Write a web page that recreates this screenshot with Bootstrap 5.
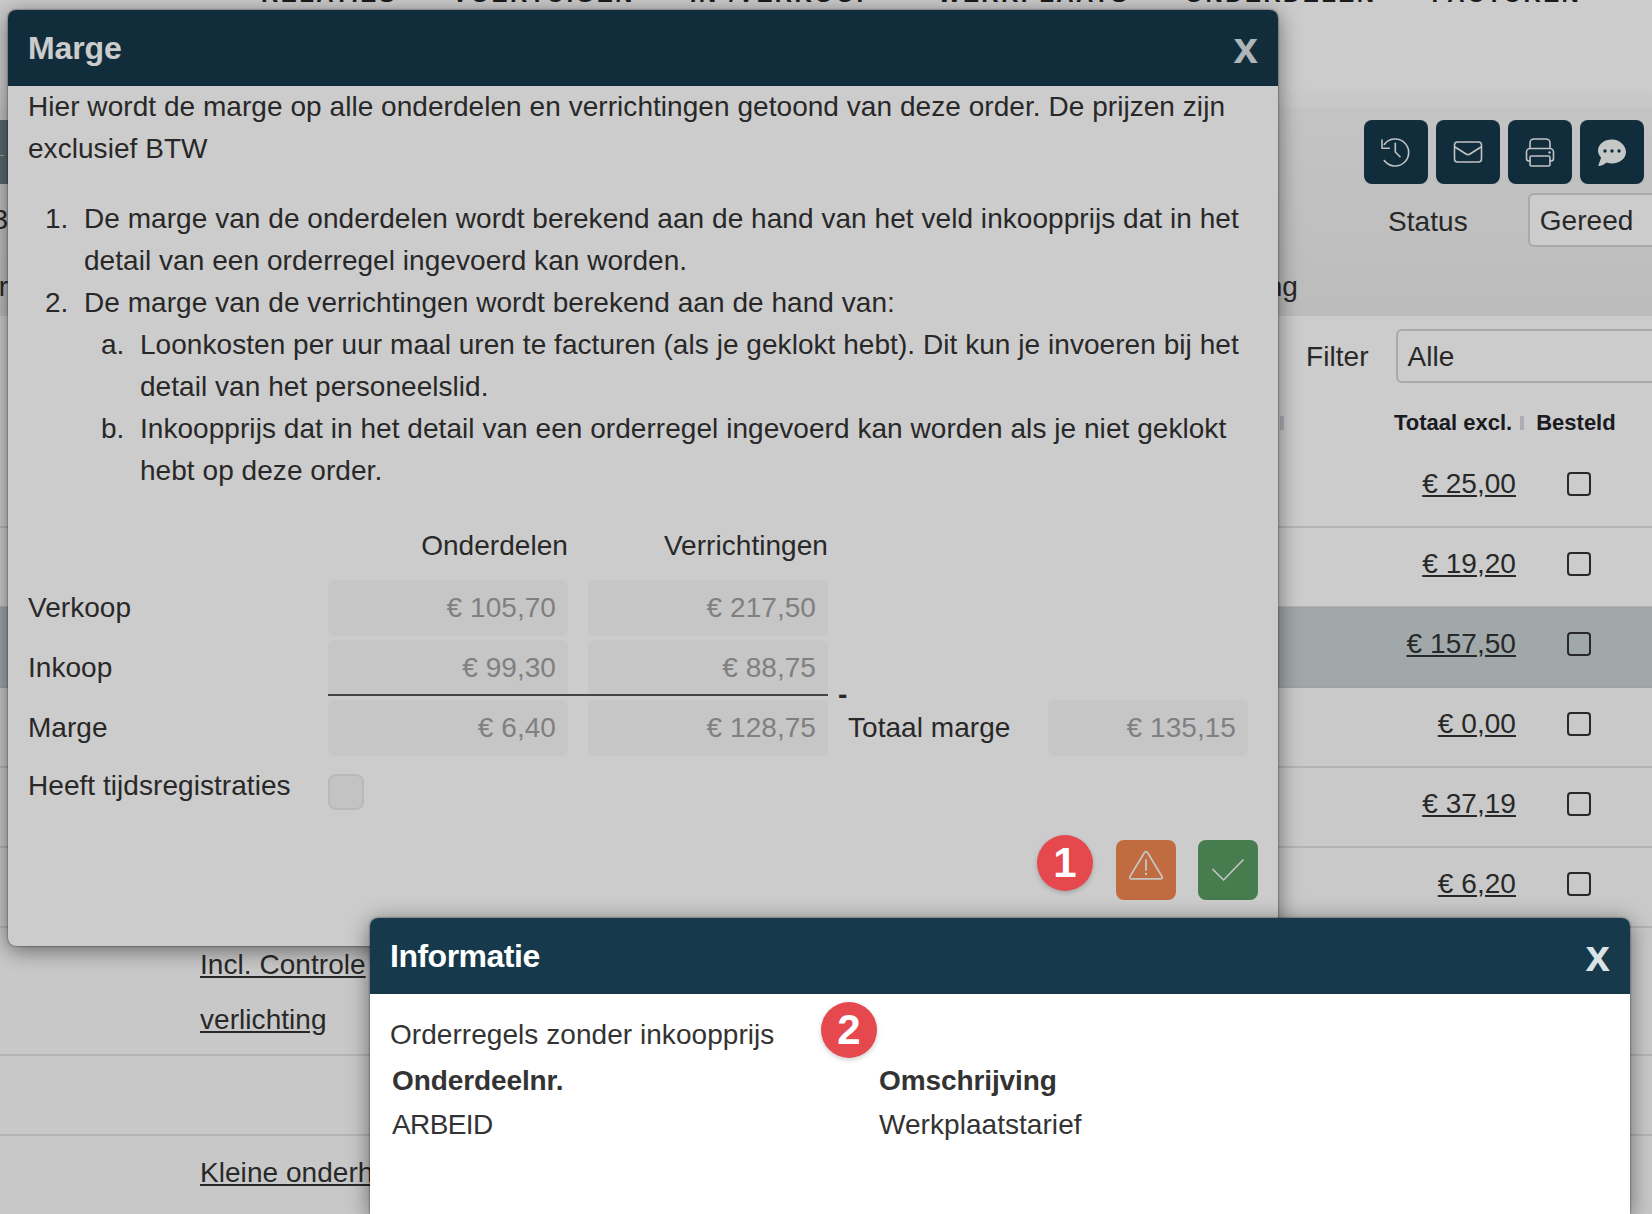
<!doctype html>
<html lang="nl">
<head>
<meta charset="utf-8">
<title>Marge</title>
<link rel="stylesheet" href="https://cdn.jsdelivr.net/npm/bootstrap@5.3.0/dist/css/bootstrap.min.css">
<style>
html,body{height:1214px;overflow:hidden;background:#fff}
body{font-family:"Liberation Sans",Arial,sans-serif;font-size:28px;line-height:42px;letter-spacing:.05px;color:#333;position:relative}
.sheet{width:1652px;height:1214px;overflow:hidden}
.topnav{height:105px;margin-top:-20px;padding:0 0 0 261px;gap:55px;font-weight:700;font-size:24px;letter-spacing:2.4px;line-height:28px;color:#222;text-transform:uppercase;white-space:nowrap}
.nav-wide{margin-right:8px}
.subbar{height:23px;background:linear-gradient(#fff,#f9f9f9)}
.band{height:208px;background:linear-gradient(#f5f5f5,#ececec);padding-top:12px}
.btnrow{gap:8px;padding-right:8px}
.back{width:64px;height:64px;margin-left:-56px;margin-right:auto;background:#6f848d;color:#ddd;font-size:20px;line-height:64px;text-align:right}
.tool{width:64px;height:64px;padding:0;border:0;border-radius:8px;background:#16394b}
.tool svg{display:block}
.tool-line{fill:none;stroke:#f2f4f5;stroke-width:1.6;stroke-linecap:round;stroke-linejoin:round}
.status-row{height:54px;margin-top:9px}
.stub{width:8px;overflow:hidden;direction:rtl;flex:none;margin-right:1380px}
.pick.form-select{font-size:28px;line-height:32px;color:#333;height:54px;padding:10px;border:2px solid #d4d4d4;border-radius:6px;background-color:#fff;flex:none;width:400px}
.pick-status{margin-left:60px}
.cut-row{height:42px;margin-top:19px;white-space:nowrap}
.cut-l{width:8px;overflow:hidden;flex:none;direction:rtl}
.cut-r{width:1290px;text-align:right;flex:none}
.filter-row{height:80px;padding-left:1306px;padding-top:13px;white-space:nowrap}
.filter-label{padding-top:7px}
.filter-row .pick{margin-left:27px}
.head-row{height:52px;padding-top:1px;font-size:22px;line-height:30px;font-weight:700;letter-spacing:0;color:#1f2428;white-space:nowrap}
.sep{display:inline-block;width:4px;height:14px;background:#d6dbe3}
.sep-a{margin-left:1280px;margin-right:110px}
.sep-b{margin-left:8px;margin-right:12px}
.trow{height:80px;padding-bottom:7px;border-bottom:2px solid #e2e2e2;padding-right:61px}
.trow.picked{background:#c9d2d5;border-bottom-color:#c4cccf;border-top:1px solid #c4cccf;height:81px;margin-top:-1px}
.trow.soft{background:#fcfcfc}
.trow a,a.textcell{color:#333}
.amt{margin-right:51px;text-decoration:underline}
.trow .tick{width:24px;height:24px;margin:0;flex:none;border:2px solid #333;border-radius:4px;background-color:transparent}
.textrow{height:128px;border-bottom:2px solid #e2e2e2;padding:16px 0 0 200px;background:#fbfbfb}
.textcell{display:block;line-height:42px;margin-bottom:13px}
.emptyrow{height:80px;border-bottom:2px solid #e2e2e2;background:#fbfbfb}
.lastrow{height:200px;padding:16px 0 0 200px;background:#fbfbfb}
.win{position:absolute;background:#fff;box-shadow:0 0 2px rgba(0,0,0,.7),0 4px 22px rgba(0,0,0,.5)}
.win-a{left:8px;top:10px;width:1270px;height:936px;border-radius:8px;z-index:10}
.win-b{left:370px;top:918px;width:1260px;height:296px;border-radius:8px 8px 0 0;z-index:30}
.win-head{height:76px;background:#16394b;color:#fff;padding:0 20px;border-radius:8px 8px 0 0}
.win-title{font-size:32px;font-weight:700;line-height:77px;letter-spacing:-.1px}
.win-b .win-title{letter-spacing:-.5px}
.win-x{font-size:44px;font-weight:700;color:#dce3e6;line-height:76px;letter-spacing:0}
.win-a .win-body{padding:0 28px 0 20px}
.win-b .win-body{padding:20px 20px}
.win-a .intro{margin:0 0 28px}
.steps{margin:0 0 33px;padding-left:56px}
.steps ol{margin:0;padding-left:56px}
.steps>li::marker{content:counter(list-item) ".\00a0\00a0"}
.steps ol>li::marker{content:counter(list-item,lower-alpha) ".\00a0\00a0"}
.mrow{height:56px;margin-bottom:4px;gap:20px;position:relative;align-items:center}
.mrow.headline{height:42px;margin-bottom:13px}
.mlabel{width:300px;flex:none;margin-right:-20px}
.mcol{width:240px;flex:none}
.val.form-control{width:240px;height:56px;flex:none;padding:7px 12px;font-size:28px;line-height:42px;text-align:right;color:#a0a0a0;background:#f8f8f8;border:0;border-radius:6px}
.val.wide{width:200px}
.rule{position:absolute;left:300px;width:500px;bottom:0;height:2px;background:#555}
.dash{position:absolute;left:810px;top:41px;line-height:28px;font-size:28px;font-weight:700}
.tlabel{width:200px;flex:none;margin-right:-20px}
.chkrow{margin-top:14px;height:36px}
.chkrow .mlabel{line-height:24px;position:relative;top:-2px}
.chkrow .form-check-input{width:36px;height:36px;margin:0;border:2px solid #e8e8e8;border-radius:8px;background-color:#f4f4f4;opacity:1;position:relative;top:4px}
.acts{gap:22px;margin-top:34px;margin-right:-8px}
.act{width:60px;height:60px;border:0;padding:0;border-radius:8px}
.act-warn{background:#f08850}
.act-ok{background:#599b62}
.act svg{display:block;margin:auto}
.act-warn svg{margin-bottom:10px}
.shade{position:absolute;inset:0;background:rgba(0,0,0,.2);z-index:20}
.pin{position:absolute;width:56px;height:56px;border-radius:50%;background:#e5484d;color:#fff;font-size:42px;font-weight:700;line-height:56px;text-align:center;z-index:40;box-shadow:0 2px 5px rgba(0,0,0,.2)}
.pin-a{left:1037px;top:835px}
.pin-b{left:821px;top:1002px}
.info-lead{margin-bottom:4px}
.grid-h{font-weight:700;letter-spacing:-.1px}
.info-a{width:489px;flex:none;padding-left:2px}
.info-tight{letter-spacing:-.6px}
.info-r{height:44px}
</style>
</head>
<body>
<div class="sheet">
  <div class="topnav d-flex"><span>Relaties</span><span>Voertuigen</span><span class="nav-wide">In-/Verkoop</span><span>Werkplaats</span><span>Onderdelen</span><span>Facturen</span></div>
  <div class="subbar"></div>
  <div class="band">
    <div class="d-flex btnrow">
      <div class="back">&#8592;</div>
      <button class="tool d-flex align-items-center justify-content-center" type="button" aria-label="Historie">
        <svg width="32" height="32" viewBox="0 0 32 32"><path class="tool-line" d="M4.3 8.500A13.500 13.500 0 1 1 4.300 24.500M2 4v8.300h7.300M15.300 7.300V16l4.700 4.700"/></svg>
      </button>
      <button class="tool d-flex align-items-center justify-content-center" type="button" aria-label="E-mail">
        <svg width="32" height="32" viewBox="0 0 32 32"><rect class="tool-line" x="2.500" y="6" width="27" height="20" rx="3"/><path class="tool-line" d="M3 11l11 7a3.600 3.600 0 0 0 4 0l11-7"/></svg>
      </button>
      <button class="tool d-flex align-items-center justify-content-center" type="button" aria-label="Printen">
        <svg width="32" height="32" viewBox="0 0 32 32"><path class="tool-line" d="M6 12.500V7a4 4 0 0 1 4-4h12a4 4 0 0 1 4 4v5.500M6 25H5a2.500 2.500 0 0 1-2.500-2.500V16A3.500 3.500 0 0 1 6 12.500h20a3.500 3.500 0 0 1 3.500 3.500v6.500A2.500 2.500 0 0 1 27 25h-1"/><rect class="tool-line" x="6" y="20" width="20" height="10" rx="1.500"/><circle cx="25.500" cy="16.500" r="1.200" fill="#f2f4f5"/></svg>
      </button>
      <button class="tool d-flex align-items-center justify-content-center" type="button" aria-label="Berichten">
        <svg width="32" height="32" viewBox="0 0 32 32"><path fill="#f8fafa" d="M16 3.500C8.300 3.500 2 8.300 2 14.500c0 2.700 1.200 5.100 3.100 7C4.400 24.500 2.500 28 2.300 30c3 0 6.300-1.500 8.300-3.400 1.700.6 3.500.9 5.400.9 7.700 0 14-5.200 14-11.500S23.700 3.500 16 3.500z"/><circle cx="9" cy="15" r="1.700" fill="#16394b"/><circle cx="16" cy="15" r="1.700" fill="#16394b"/><circle cx="23" cy="15" r="1.700" fill="#16394b"/></svg>
      </button>
    </div>
    <div class="d-flex status-row align-items-center">
      <span class="stub">3</span><span class="pt-1">Status</span><div class="pick form-select pick-status">Gereed</div>
    </div>
    <div class="d-flex cut-row">
      <span class="cut-l">r</span><span class="cut-r">ng</span>
    </div>
  </div>
  <div class="filter-row d-flex"><span class="filter-label">Filter</span><div class="pick form-select">Alle</div></div>
  <div class="head-row d-flex align-items-center">
    <span class="sep sep-a"></span><span>Totaal excl.</span><span class="sep sep-b"></span><span>Besteld</span>
  </div>
  <div class="trow d-flex align-items-center justify-content-end"><a class="amt" href="#">€ 25,00</a><input class="form-check-input tick" type="checkbox" aria-label="Besteld"></div>
  <div class="trow d-flex align-items-center justify-content-end"><a class="amt" href="#">€ 19,20</a><input class="form-check-input tick" type="checkbox" aria-label="Besteld"></div>
  <div class="trow picked d-flex align-items-center justify-content-end"><a class="amt" href="#">€ 157,50</a><input class="form-check-input tick" type="checkbox" aria-label="Besteld"></div>
  <div class="trow soft d-flex align-items-center justify-content-end"><a class="amt" href="#">€ 0,00</a><input class="form-check-input tick" type="checkbox" aria-label="Besteld"></div>
  <div class="trow soft d-flex align-items-center justify-content-end"><a class="amt" href="#">€ 37,19</a><input class="form-check-input tick" type="checkbox" aria-label="Besteld"></div>
  <div class="trow soft d-flex align-items-center justify-content-end"><a class="amt" href="#">€ 6,20</a><input class="form-check-input tick" type="checkbox" aria-label="Besteld"></div>
  <div class="textrow"><a class="textcell" href="#">Incl. Controle</a><a class="textcell" href="#">verlichting</a></div>
  <div class="emptyrow"></div>
  <div class="lastrow"><a class="textcell" href="#">Kleine onderh</a></div>
</div>

<div class="win win-a">
  <div class="win-head d-flex justify-content-between"><span class="win-title">Marge</span><span class="win-x">x</span></div>
  <div class="win-body">
    <p class="intro">Hier wordt de marge op alle onderdelen en verrichtingen getoond van deze order. De prijzen zijn exclusief BTW</p>
    <ol class="steps">
      <li>De marge van de onderdelen wordt berekend aan de hand van het veld inkoopprijs dat in het detail van een orderregel ingevoerd kan worden.</li>
      <li>De marge van de verrichtingen wordt berekend aan de hand van:
        <ol type="a">
          <li>Loonkosten per uur maal uren te facturen (als je geklokt hebt). Dit kun je invoeren bij het detail van het personeelslid.</li>
          <li>Inkoopprijs dat in het detail van een orderregel ingevoerd kan worden als je niet geklokt hebt op deze order.</li>
        </ol>
      </li>
    </ol>
    <div class="mrow headline d-flex"><span class="mlabel"></span><span class="mcol text-end">Onderdelen</span><span class="mcol text-end">Verrichtingen</span></div>
    <div class="mrow d-flex"><span class="mlabel">Verkoop</span><div class="val form-control">€ 105,70</div><div class="val form-control">€ 217,50</div></div>
    <div class="mrow d-flex"><span class="mlabel">Inkoop</span><div class="val form-control">€ 99,30</div><div class="val form-control">€ 88,75</div><span class="rule"></span><span class="dash">-</span></div>
    <div class="mrow d-flex"><span class="mlabel">Marge</span><div class="val form-control">€ 6,40</div><div class="val form-control">€ 128,75</div><span class="tlabel">Totaal marge</span><div class="val wide form-control">€ 135,15</div></div>
    <div class="mrow chkrow d-flex"><span class="mlabel">Heeft tijdsregistraties</span><input class="form-check-input" type="checkbox" disabled aria-label="Heeft tijdsregistraties"></div>
    <div class="d-flex justify-content-end acts">
      <button class="act act-warn" type="button" aria-label="Waarschuwing">
        <svg width="36" height="32" viewBox="0 0 36 32"><path fill="none" stroke="#f6f6f6" stroke-width="1.700" stroke-linejoin="round" d="M16.500 3.500a1.800 1.800 0 0 1 3 0L34 27.500a1.500 1.500 0 0 1-1.300 2.300H3.300A1.500 1.500 0 0 1 2 27.500Z"/><path stroke="#f6f6f6" stroke-width="1.800" stroke-linecap="round" d="M18 11v10"/><circle cx="18" cy="25" r="1.200" fill="#f6f6f6"/></svg>
      </button>
      <button class="act act-ok" type="button" aria-label="Bevestigen">
        <svg width="34" height="24" viewBox="0 0 34 24"><path fill="none" stroke="#f6f6f6" stroke-width="1.700" stroke-linecap="round" stroke-linejoin="round" d="M2 11.500 L12.500 22 L32 2"/></svg>
      </button>
    </div>
  </div>
</div>

<div class="shade"></div>

<div class="win win-b">
  <div class="win-head d-flex justify-content-between"><span class="win-title">Informatie</span><span class="win-x">x</span></div>
  <div class="win-body">
    <div class="info-lead">Orderregels zonder inkoopprijs</div>
    <div class="d-flex info-r grid-h"><span class="info-a">Onderdeelnr.</span><span>Omschrijving</span></div>
    <div class="d-flex info-r"><span class="info-a info-tight">ARBEID</span><span>Werkplaatstarief</span></div>
  </div>
</div>
<div class="pin pin-a">1</div>
<div class="pin pin-b">2</div>

<script src="https://cdn.jsdelivr.net/npm/bootstrap@5.3.0/dist/js/bootstrap.bundle.min.js"></script>
</body>
</html>
